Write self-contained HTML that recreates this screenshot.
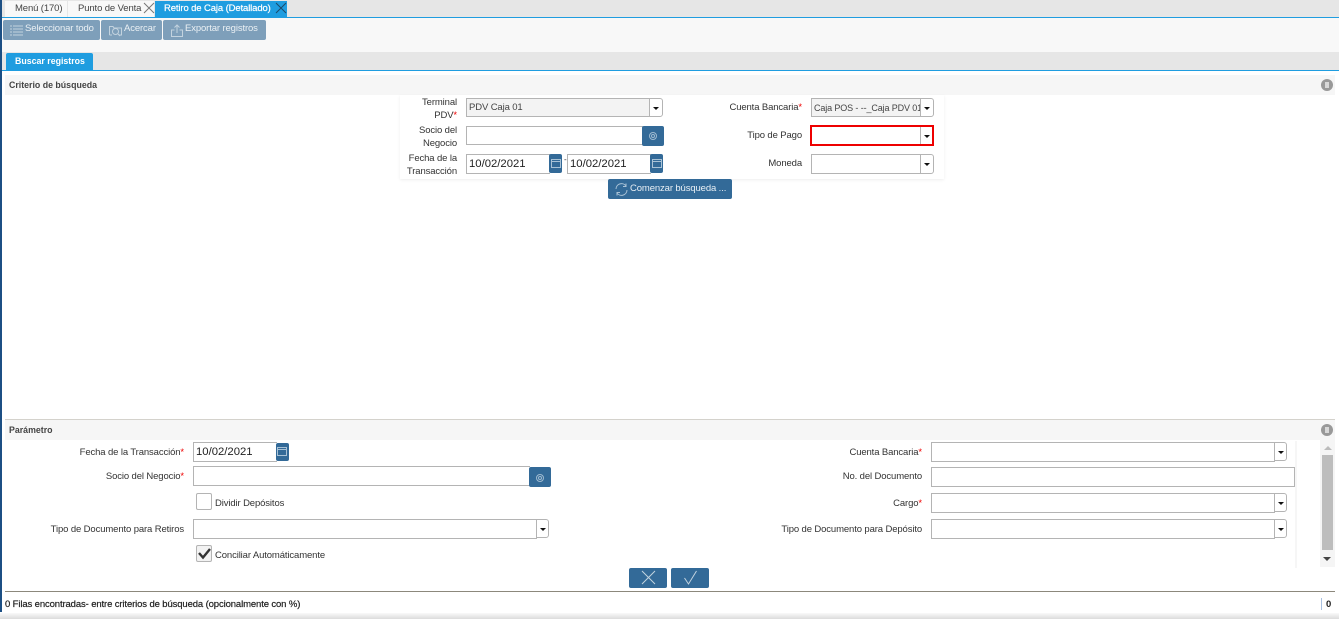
<!DOCTYPE html>
<html><head><meta charset="utf-8">
<style>
html,body{margin:0;padding:0;width:1339px;height:619px;overflow:hidden;background:#fff}
body{position:relative;font-family:"Liberation Sans",sans-serif;font-size:9.5px;letter-spacing:-.12px;color:#333}
.a{position:absolute;box-sizing:border-box}
.t{position:absolute;white-space:nowrap;line-height:12px}
.h{font-weight:bold;font-size:8.8px;letter-spacing:0;color:#444}
.l{position:absolute;text-align:right;line-height:13px;color:#333;font-size:9.5px;white-space:nowrap}
i{color:#e00;font-style:normal}
.inp{position:absolute;box-sizing:border-box;background:#fff;border:1px solid #b4b4b4;border-right:0}
.dd{position:absolute;box-sizing:border-box;background:#fff;border:1px solid #b4b4b4;border-radius:0 3px 3px 0}
.dd:after{content:"";position:absolute;left:3px;top:8px;border:3px solid transparent;border-top:3px solid #111;border-bottom:0}
.bb{position:absolute;box-sizing:border-box;background:#336a98;border-radius:2px}
.tb{position:absolute;top:20px;height:20px;background:#7e9fba;border-radius:2px;color:#eaf0f4;line-height:18px}
svg{position:absolute;overflow:visible}
.dt{position:absolute;font-size:11.3px;letter-spacing:0;line-height:18px;color:#222;padding-left:2px;box-sizing:border-box;background:#fff;border:1px solid #b4b4b4;border-right:0}
</style></head><body>
<div class="a" style="left:0;top:0;width:2px;height:612px;background:#1c4f84"></div>

<!-- tab bar -->
<div class="a" style="left:2px;top:0;width:1337px;height:18px;background:#e6e6e6"></div>
<div class="a" style="left:5px;top:1px;width:62px;height:16px;background:#f8f8f8"></div>
<div class="t" style="left:15px;top:3px;color:#444">Menú (170)</div>
<div class="a" style="left:68px;top:1px;width:86px;height:16px;background:#f8f8f8"></div>
<div class="t" style="left:78px;top:3px;color:#444">Punto de Venta</div>
<svg style="left:144px;top:3px" width="10" height="10"><path d="M0 0L10 10M10 0L0 10" stroke="#777" stroke-width="1" fill="none"/></svg>
<div class="a" style="left:155px;top:1px;width:132px;height:16px;background:#1f9de0"></div>
<div class="t" style="left:164px;top:3px;color:#fff;-webkit-text-stroke:.2px #fff">Retiro de Caja (Detallado)</div>
<svg style="left:276px;top:3px" width="10" height="10"><path d="M0 0L10 10M10 0L0 10" stroke="#1b4a6b" stroke-width="1" fill="none"/></svg>
<div class="a" style="left:2px;top:17px;width:1337px;height:1px;background:#1f9de0"></div>

<!-- toolbar -->
<div class="a" style="left:2px;top:18px;width:1337px;height:34px;background:#f8f8f8"></div>
<div class="tb" style="left:3px;width:97px"><span class="t" style="left:22px;top:3px">Seleccionar todo</span>
<svg style="left:7px;top:4px" width="13" height="12"><path d="M3 2H13M3 5H13M3 8H13M3 11H13M0 2H2M0 5H2M0 8H2M0 11H2" stroke="#c3d3df" stroke-width="1" fill="none"/></svg></div>
<div class="tb" style="left:101px;width:61px"><span class="t" style="left:23px;top:3px">Acercar</span>
<svg style="left:8px;top:4px" width="13" height="12"><path d="M0.5 11V2.5H4L5 4H12.5V11H10M3 11H0.5" stroke="#c3d3df" fill="none"/><circle cx="6.5" cy="7.5" r="3" stroke="#c3d3df" fill="none"/><path d="M9 10L11 12" stroke="#c3d3df"/></svg></div>
<div class="tb" style="left:163px;width:103px"><span class="t" style="left:22px;top:3px">Exportar registros</span>
<svg style="left:8px;top:4px" width="12" height="13"><path d="M3.5 6H0.5V12.5H11.5V6H8.5M6 9V1M3.5 3.5L6 1L8.5 3.5" stroke="#c3d3df" fill="none"/></svg></div>

<!-- search tab -->
<div class="a" style="left:2px;top:52px;width:1337px;height:18px;background:#e6e6e6"></div>
<div class="a" style="left:6px;top:53px;width:87px;height:17px;background:#1f9de0;border-radius:2px 2px 0 0"></div>
<div class="t h" style="left:15px;top:55px;color:#fff">Buscar registros</div>
<div class="a" style="left:2px;top:70px;width:1337px;height:1px;background:#1f9de0"></div>

<!-- Criterio header -->
<div class="a" style="left:5px;top:75px;width:1330px;height:20px;background:#f6f6f6"></div>
<div class="t h" style="left:9px;top:79px">Criterio de búsqueda</div>
<div class="a" style="left:1321px;top:79px;width:12px;height:12px;border-radius:50%;background:#999"></div>
<div class="a" style="left:1325px;top:82px;width:4px;height:6px;background:#d8d8d8"></div>

<!-- criterio form -->
<div class="a" style="left:400px;top:95px;width:544px;height:84px;background:#fff;box-shadow:0 1px 3px rgba(0,0,0,.07)"></div>
<div class="l" style="left:400px;top:96px;width:57px">Terminal<br>PDV<i>*</i></div>
<div class="a" style="left:466px;top:98px;width:184px;height:19px;background:#f3f3f3;border:1px solid #b4b4b4;border-right:0"></div>
<div class="t" style="left:469px;top:102px;color:#444">PDV Caja 01</div>
<div class="dd" style="left:649px;top:98px;width:14px;height:19px"></div>

<div class="l" style="left:400px;top:124px;width:57px">Socio del<br>Negocio</div>
<div class="inp" style="left:466px;top:126px;width:177px;height:19px"></div>
<div class="bb" style="left:642px;top:126px;width:22px;height:20px"></div>
<svg style="left:649px;top:132px" width="8" height="8"><circle cx="4" cy="4" r="3.5" stroke="#9fbad0" fill="none"/><circle cx="4" cy="4" r="1.5" stroke="#9fbad0" fill="none"/></svg>

<div class="l" style="left:400px;top:152px;width:57px">Fecha de la<br>Transacción</div>
<div class="dt" style="left:466px;top:154px;width:84px;height:20px">10/02/2021</div>
<div class="bb" style="left:549px;top:154px;width:13px;height:19px"></div>
<svg style="left:551px;top:158px" width="10" height="10"><path d="M0.5 1.5H9.5V9.5H0.5ZM0.5 3.5H9.5" stroke="#a9c2d6" fill="none"/></svg>
<div class="t" style="left:564px;top:154px;font-size:8px">-</div>
<div class="dt" style="left:567px;top:154px;width:84px;height:20px">10/02/2021</div>
<div class="bb" style="left:650px;top:154px;width:13px;height:19px"></div>
<svg style="left:652px;top:158px" width="10" height="10"><path d="M0.5 1.5H9.5V9.5H0.5ZM0.5 3.5H9.5" stroke="#a9c2d6" fill="none"/></svg>

<div class="l" style="left:700px;top:101px;width:102px">Cuenta Bancaria<i>*</i></div>
<div class="a" style="left:811px;top:98px;width:110px;height:19px;background:#f3f3f3;border:1px solid #b4b4b4;border-right:0"></div>
<div class="t" style="left:814px;top:102px;color:#444;font-size:9px">Caja POS - --_Caja PDV 01</div>
<div class="dd" style="left:920px;top:98px;width:14px;height:19px"></div>

<div class="l" style="left:700px;top:129px;width:102px">Tipo de Pago</div>
<div class="a" style="left:810px;top:125px;width:124px;height:21px;border:2px solid #ee0000;background:#fff"></div>
<div class="a" style="left:920px;top:127px;width:1px;height:17px;background:#b4b4b4"></div>
<div class="a" style="left:924px;top:135px;border:3px solid transparent;border-top:3px solid #111;border-bottom:0"></div>

<div class="l" style="left:700px;top:157px;width:102px">Moneda</div>
<div class="inp" style="left:811px;top:154px;width:110px;height:20px"></div>
<div class="dd" style="left:920px;top:154px;width:14px;height:20px"></div>

<div class="bb" style="left:608px;top:179px;width:124px;height:20px"></div>
<svg style="left:615px;top:183px" width="13" height="13"><path d="M1 6A5.5 5.5 0 0 1 11 3M12 7A5.5 5.5 0 0 1 2 10M11 0.5V3.5H8M2 12.5V9.5H5" stroke="#a9c2d6" fill="none"/></svg>
<div class="t" style="left:630px;top:183px;color:#e8eff5">Comenzar búsqueda ...</div>

<!-- Parametro -->
<div class="a" style="left:5px;top:419px;width:1330px;height:1px;background:#d4d2cc"></div>
<div class="a" style="left:5px;top:420px;width:1330px;height:20px;background:#f6f6f6"></div>
<div class="t h" style="left:9px;top:424px">Parámetro</div>
<div class="a" style="left:1321px;top:424px;width:12px;height:12px;border-radius:50%;background:#999"></div>
<div class="a" style="left:1325px;top:427px;width:4px;height:6px;background:#d8d8d8"></div>

<div class="l" style="left:20px;top:446px;width:164px">Fecha de la Transacción<i>*</i></div>
<div class="dt" style="left:193px;top:442px;width:84px;height:20px">10/02/2021</div>
<div class="bb" style="left:276px;top:443px;width:13px;height:18px"></div>
<svg style="left:277px;top:446px" width="10" height="10"><path d="M0.5 1.5H9.5V9.5H0.5ZM0.5 3.5H9.5" stroke="#a9c2d6" fill="none"/></svg>

<div class="l" style="left:20px;top:470px;width:164px">Socio del Negocio<i>*</i></div>
<div class="inp" style="left:193px;top:466px;width:337px;height:20px"></div>
<div class="bb" style="left:529px;top:467px;width:22px;height:20px"></div>
<svg style="left:536px;top:474px" width="8" height="8"><circle cx="4" cy="4" r="3.5" stroke="#9fbad0" fill="none"/><circle cx="4" cy="4" r="1.5" stroke="#9fbad0" fill="none"/></svg>

<div class="a" style="left:196px;top:493px;width:16px;height:17px;background:#fff;border:1px solid #b4b4b4;border-radius:2px"></div>
<div class="t" style="left:215px;top:498px">Dividir Depósitos</div>

<div class="l" style="left:20px;top:523px;width:164px">Tipo de Documento para Retiros</div>
<div class="inp" style="left:193px;top:519px;width:344px;height:20px"></div>
<div class="dd" style="left:536px;top:519px;width:13px;height:19px"></div>

<div class="a" style="left:196px;top:545px;width:16px;height:17px;background:#f2f2f2;border:1px solid #b4b4b4;border-radius:2px"></div>
<svg style="left:197px;top:547px" width="15" height="13"><path d="M2 6L6 10.5L13 2" stroke="#333" stroke-width="2.4" fill="none"/></svg>
<div class="t" style="left:215px;top:550px">Conciliar Automáticamente</div>

<div class="l" style="left:780px;top:446px;width:142px">Cuenta Bancaria<i>*</i></div>
<div class="inp" style="left:931px;top:442px;width:344px;height:20px"></div>
<div class="dd" style="left:1274px;top:442px;width:13px;height:19px"></div>

<div class="l" style="left:780px;top:470px;width:142px">No. del Documento</div>
<div class="a" style="left:931px;top:467px;width:364px;height:20px;border:1px solid #b4b4b4;background:#fff"></div>

<div class="l" style="left:780px;top:497px;width:142px">Cargo<i>*</i></div>
<div class="inp" style="left:931px;top:493px;width:344px;height:20px"></div>
<div class="dd" style="left:1274px;top:493px;width:13px;height:19px"></div>

<div class="l" style="left:750px;top:523px;width:172px">Tipo de Documento para Depósito</div>
<div class="inp" style="left:931px;top:519px;width:344px;height:20px"></div>
<div class="dd" style="left:1274px;top:519px;width:13px;height:19px"></div>

<div class="a" style="left:1295px;top:441px;width:2px;height:127px;background:#f6f6f6"></div>
<div class="a" style="left:1320px;top:440px;width:15px;height:127px;background:#f5f5f5"></div>
<div class="a" style="left:1322px;top:455px;width:11px;height:95px;background:#bdbdbd"></div>
<div class="a" style="left:1324px;top:446px;border:4px solid transparent;border-bottom:4px solid #bbb;border-top:0"></div>
<div class="a" style="left:1323px;top:557px;border:4px solid transparent;border-top:4px solid #444;border-bottom:0"></div>

<div class="bb" style="left:629px;top:568px;width:38px;height:20px"></div>
<svg style="left:642px;top:571px" width="13" height="13"><path d="M0 0L13 13M13 0L0 13" stroke="#c2d3e0" fill="none"/></svg>
<div class="bb" style="left:671px;top:568px;width:38px;height:20px"></div>
<svg style="left:684px;top:571px" width="13" height="13"><path d="M0.5 7L4.5 13L12.5 0" stroke="#c2d3e0" fill="none"/></svg>

<!-- footer -->
<div class="a" style="left:5px;top:591px;width:1330px;height:1px;background:#8c887c"></div>
<div class="t" style="left:5px;top:599px;color:#222;-webkit-text-stroke:.2px #222">0 Filas encontradas- entre criterios de búsqueda (opcionalmente con %)</div>
<div class="a" style="left:1321px;top:598px;width:1px;height:12px;background:#a9c0e0"></div>
<div class="t" style="left:1326px;top:599px;color:#222;font-weight:bold">0</div>
<div class="a" style="left:0;top:613px;width:1339px;height:6px;background:linear-gradient(#fafafa,#dcdcdc)"></div>
</body></html>
